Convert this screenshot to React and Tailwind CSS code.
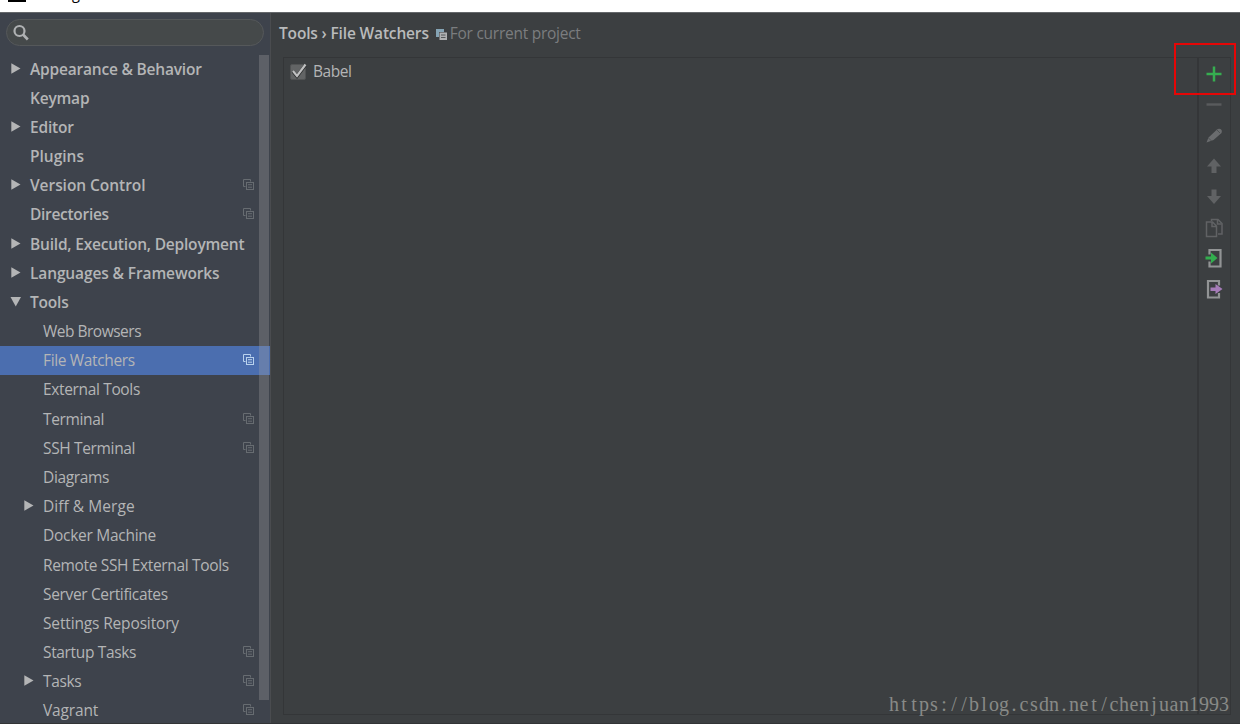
import React, { useState } from 'react';
import clsx from 'clsx';

const TREE = [
    { label: 'Appearance & Behavior', level: 0, arrow: 'right' },
    { label: 'Keymap', level: 0 },
    { label: 'Editor', level: 0, arrow: 'right' },
    { label: 'Plugins', level: 0, spacing: 'tracking-[0px]' },
    { label: 'Version Control', level: 0, arrow: 'right', project: true, spacing: 'tracking-[-0.05px]' },
    { label: 'Directories', level: 0, project: true, spacing: 'tracking-[-0.3px]' },
    { label: 'Build, Execution, Deployment', level: 0, arrow: 'right' },
    { label: 'Languages & Frameworks', level: 0, arrow: 'right', spacing: 'tracking-[-0.12px]' },
    { label: 'Tools', level: 0, arrow: 'down' },
    { label: 'Web Browsers', level: 1, spacing: 'tracking-[-0.5px]' },
    { label: 'File Watchers', level: 1, project: true },
    { label: 'External Tools', level: 1 },
    { label: 'Terminal', level: 1, project: true },
    { label: 'SSH Terminal', level: 1, project: true },
    { label: 'Diagrams', level: 1 },
    { label: 'Diff & Merge', level: 1, arrow: 'right', spacing: 'tracking-[0.05px]' },
    { label: 'Docker Machine', level: 1, spacing: 'tracking-[-0.27px]' },
    { label: 'Remote SSH External Tools', level: 1 },
    { label: 'Server Certificates', level: 1 },
    { label: 'Settings Repository', level: 1, spacing: 'tracking-[-0.15px]' },
    { label: 'Startup Tasks', level: 1, project: true },
    { label: 'Tasks', level: 1, arrow: 'right', project: true },
    { label: 'Vagrant', level: 1, project: true, spacing: 'tracking-[-0.15px]' },
];

const Arrow = ({ direction }) => (
    <svg width="12" height="12" viewBox="0 0 12 12" fill="#b4b5b6">
        {direction === 'down' ? <path d="M0.5 1h10.5L5.75 10.500z" /> : <path d="M1.3 0.3v10.400L10.500 5.500z" />}
    </svg>
);

const ProjectIcon = ({ className }) => (
    <svg width="12" height="12" viewBox="0 0 12 12" fill="none" stroke="currentColor" className={className}>
        <path d="M2.500 7.500h-2v-7h7v2" />
        <rect x="3.500" y="3.500" width="7" height="7" />
        <path d="M5 5.700h4M5 8.200h4" />
    </svg>
);

const TreeRow = ({ item, selected, onSelect }) => (
    <div
        onClick={() => onSelect(item.label)}
        className={clsx('flex h-[29.18px] shrink-0 items-center pr-[15px]', selected && 'bg-[#4b6eaf]')}
    >
        <div className={clsx('flex shrink-0 items-center', item.level === 0 ? 'w-[30px] pl-[10px]' : 'w-[43px] pl-[23px]')}>
            {item.arrow && <Arrow direction={item.arrow} />}
        </div>
        <span
            className={clsx(
                'flex-1 text-[15.5px] leading-[22px] whitespace-nowrap text-[#b4b5b6]',
                item.level === 0 && 'font-semibold',
                item.spacing || (item.level === 0 ? 'tracking-[-0.2px]' : 'tracking-[-0.35px]')
            )}
        >
            {item.label}
        </span>
        {item.project && <ProjectIcon className={selected ? 'text-[#b9d2ee]' : 'text-[#676c71]'} />}
    </div>
);

const Toolbar = () => (
    <div className="flex w-[33px] flex-col items-center border-l-2 border-[#343638] pt-[1px]">
        <svg width="30" height="248" viewBox="0 0 30 248" fill="none">
            {/* add */}
            <path d="M14 7.500v15M6.500 15h15" stroke="#36ad50" strokeWidth="2.500" />
            {/* remove */}
            <path d="M6.500 45.500h15" stroke="#595b5d" strokeWidth="2.400" />
            {/* edit */}
            <path d="M6.500 83.500l2-5 8-7.500q2-2 4-1t1 4l-8 7z" fill="#6a6c6e" />
            <path d="M8.500 79l3 3M16.500 70.500l3.500 3.500" stroke="#484b4d" strokeWidth="0.8" />
            {/* move up / down */}
            <path d="M14 99.500l7 8h-4.500v6.500h-5v-6.500H7z" fill="#606264" />
            <path d="M14 145l7-8h-4.500v-6.500h-5v6.500H7z" fill="#606264" />
            {/* copy */}
            <path d="M11.500 162v-1.500h6.500l4 4V175h-4" stroke="#606264" strokeWidth="1.500" />
            <path d="M6.500 163h6l4 4v10.500h-10zM12 163v4.500h4.500M17.500 161v4h4" stroke="#606264" strokeWidth="1.500" />
            {/* import */}
            <path d="M9.500 195.500v-4.500h11v16.500h-11v-5" stroke="#929495" strokeWidth="2.200" />
            <path d="M5.500 197.500h5.500v-4l6.500 5.500-6.500 5.500V200.500h-5.500z" fill="#32ae4e" />
            {/* export */}
            <path d="M19 226.500v-4.500H8v16.500H19V234" stroke="#929495" strokeWidth="2.200" />
            <path d="M10.500 228.500h5v-3.500l7 5-7 5V232h-5z" fill="#a67cb8" />
        </svg>
    </div>
);

const App = () => {
    const [selected, setSelected] = useState('File Watchers');
    const [enabled, setEnabled] = useState(true);

    return (
        <div className="relative flex h-[724px] w-[1240px] flex-col overflow-hidden bg-[#3c3f41] font-['Open_Sans','Noto_Sans',sans-serif] text-[15.5px]">
            {/* Title bar */}
            <div className="flex h-[12px] shrink-0 items-start overflow-hidden bg-white pl-[8px]">
                <div className="h-[2px] w-[18px] bg-black" />
                <span className="-mt-[16px] ml-[7px] text-[14.5px] leading-[20px] text-black">Settings</span>
            </div>

            <div className="flex h-[712px] border-t border-[#65686b] border-b border-b-[#323436]">
                {/* Sidebar */}
                <div className="relative flex w-[271px] flex-col overflow-hidden border-r border-[#4a4c4f] bg-[#3e434c]">
                    <div className="mt-[6px] ml-[6px] flex h-[27px] w-[258px] shrink-0 items-center rounded-full border border-[#55585a] bg-[#45494a] pl-[6px]">
                        <svg width="17" height="17" viewBox="0 0 17 17" fill="none" stroke="#afb1b3">
                            <circle cx="6.500" cy="7" r="5" strokeWidth="2.200" />
                            <path d="M10 10.500l4.800 5" strokeWidth="2.600" />
                        </svg>
                    </div>
                    <div className="mt-[8px] flex flex-col">
                        {TREE.map(item => (
                            <TreeRow key={item.label} item={item} selected={item.label === selected} onSelect={setSelected} />
                        ))}
                    </div>
                    <div className="absolute top-[42px] right-[1px] h-[645px] w-[10px] bg-[#a6a6a6]/30" />
                </div>

                {/* Content */}
                <div className="flex flex-1 flex-col pt-[10px] pl-[8px]">
                    <div className="flex h-[22px] items-center whitespace-nowrap">
                        <span className="font-semibold tracking-[-0.16px] text-[#b9babb]">Tools › File Watchers</span>
                        <svg width="11" height="11" viewBox="0 0 11 11" className="ml-[7px]">
                            <path d="M0 0h8v3H3v5H0z" fill="#85a4b5" />
                            <path d="M3.500 3.500H11V11H3.500z" fill="#b0b1b2" />
                            <path d="M5 6h4.500M5 8.500h4.500" stroke="#55585a" />
                        </svg>
                        <span className="ml-[3px] tracking-[-0.26px] text-[#7b7d7f]">For current project</span>
                    </div>
                    <div className="mt-[12px] ml-[4px] flex h-[658px] w-[948px] border border-[#343638]">
                        <div className="flex-1 pt-[2px] pl-[5px]">
                            <div className="flex h-[24px] items-center" onClick={() => setEnabled(!enabled)}>
                                <svg width="19" height="19" viewBox="0 0 19 19">
                                    <rect x="1.500" y="1.500" width="15" height="15" rx="1.500" fill="#626465" stroke="#515354" />
                                    {enabled && <path d="M4 8.500l4 5L16.500 2" fill="none" stroke="#292b2c" strokeWidth="3.200" />}
                                    {enabled && <path d="M4 8l4 5L16.500 1.500" fill="none" stroke="#bfc0c1" strokeWidth="2.200" />}
                                </svg>
                                <span className="ml-[5px] tracking-[-0.45px] text-[#b4b5b6]">Babel</span>
                            </div>
                        </div>
                        <Toolbar />
                    </div>
                </div>
            </div>

            {/* Highlight around the add button */}
            <div className="absolute top-[43px] left-[1174px] h-[52px] w-[62px] border-2 border-[#e60606]" />
            <div className="absolute top-[692px] left-[889px] flex font-['Liberation_Serif',serif] text-[20px] leading-[24px] text-[#888a87]">
                {[...'https://blog.csdn.net/chenjuan1993'].map((char, i) => (
                    <span key={i} className="w-[10px] text-center">{char}</span>
                ))}
            </div>
        </div>
    );
};

export default App;
